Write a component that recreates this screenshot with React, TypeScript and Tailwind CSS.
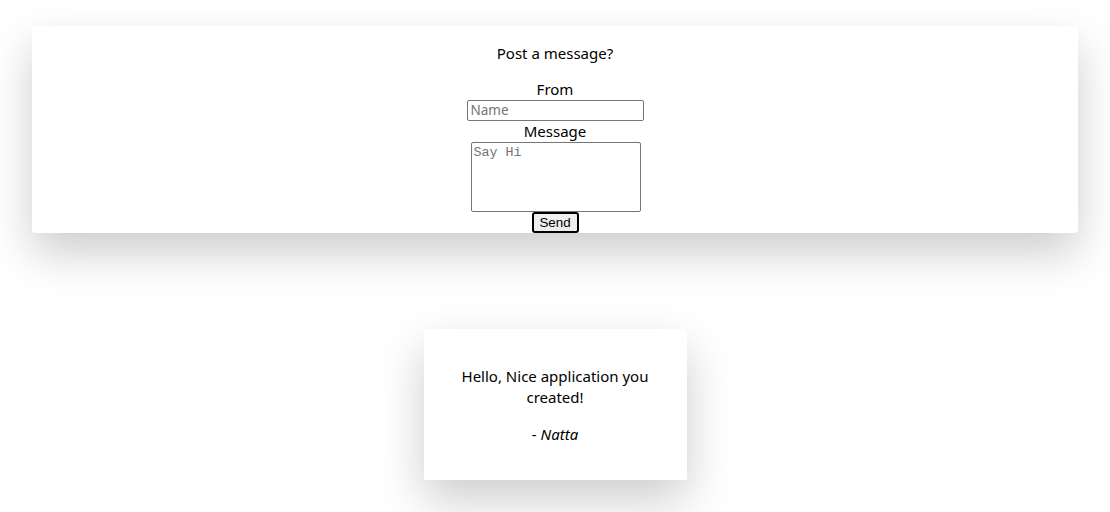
import React from "react";

export default function App() {
  return (
    <div className="min-h-[512px] bg-white text-black font-['Noto_Sans',sans-serif] text-[15px] leading-[21px] pt-[26px] flex flex-col items-center">
      <div className="w-[1046px] bg-white rounded-[4px] shadow-[0_20px_45px_rgba(0,0,0,0.2)] flex flex-col items-center">
        <p className="mt-[17px] mb-[15px]">Post a message?</p>
        <label className="block text-center">From</label>
        <input
          placeholder="Name"
          className="w-[177px] h-[21px] border border-[#767676] rounded-[2px] px-[3px] text-[13.5px] font-['Noto_Sans',sans-serif] placeholder:text-[#757575] outline-none"
        />
        <label className="block text-center">Message</label>
        <textarea
          placeholder="Say Hi"
          className="w-[170px] h-[70px] ml-[1px] border border-[#767676] rounded-[2px] px-[2px] py-[2px] text-[13.33px] leading-[15px] font-['Liberation_Mono',monospace] placeholder:text-[#757575] resize-none outline-none block"
        />
        <button className="w-[47px] h-[21px] border-2 border-black rounded-[3px] bg-[#efefef] text-[13.33px] leading-[15px] font-['Liberation_Sans',Arial,sans-serif] flex items-center justify-center">
          Send
        </button>
      </div>
      <div className="mt-[96px] w-[263px] bg-white shadow-[0_20px_45px_rgba(0,0,0,0.2)] pt-[37px] pb-[35px] px-[32px] text-center">
        <p>Hello, Nice application you created!</p>
        <p className="mt-[16px]">
          - <i>Natta</i>
        </p>
      </div>
    </div>
  );
}
